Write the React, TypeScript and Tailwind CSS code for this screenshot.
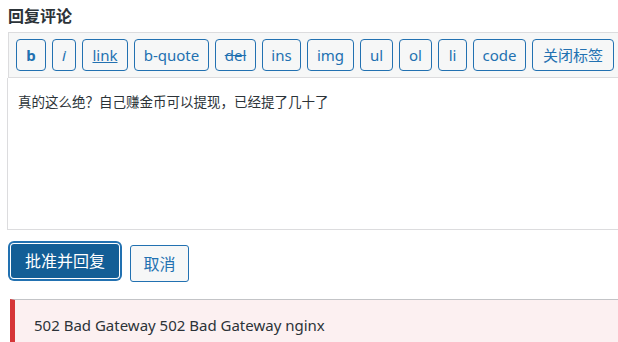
import React from "react";

const btns: { label: string; w: string; cls?: string }[] = [
  { label: "b", w: "w-[30px]", cls: "font-bold" },
  { label: "i", w: "w-[24px]", cls: "italic" },
  { label: "link", w: "w-[46px]", cls: "underline" },
  { label: "b-quote", w: "w-[75px]" },
  { label: "del", w: "w-[41px]", cls: "line-through" },
  { label: "ins", w: "w-[39px]" },
  { label: "img", w: "w-[47px]" },
  { label: "ul", w: "w-[33px]" },
  { label: "ol", w: "w-[33px]" },
  { label: "li", w: "w-[29px]" },
  { label: "code", w: "w-[53px]" },
  { label: "关闭标签", w: "w-[82px]" },
];

export default function App() {
  return (
    <div className="relative w-[618px] h-[342px] overflow-hidden bg-white font-['Noto_Sans','Noto_Sans_CJK_SC',sans-serif]">
      <div className="pl-[8px] pt-[6px] h-[32px] text-[16px] font-bold leading-[20px] text-[#2c3338]">
        回复评论
      </div>
      <div className="ml-[8px] w-[640px] border border-[#dcdcde] bg-[#f6f7f7] pl-[7px] pt-[6px] pb-[6px] flex gap-[6px]">
        {btns.map((b) => (
          <div
            key={b.label}
            className={`${b.w} h-[32px] shrink-0 flex items-center justify-center rounded-[4px] border border-[#2271b1] bg-[#f6f7f7] text-[15px] text-[#2271b1] leading-none`}
          >
            <span className={b.cls}>{b.label}</span>
          </div>
        ))}
      </div>
      <div className="ml-[7px] w-[640px] h-[152px] border-x border-b border-[#dcdcde] bg-white pl-[10px] pt-[13px]">
        <div className="text-[13.5px] leading-[20px] text-[#2c3338] font-['Noto_Sans_CJK_SC',sans-serif]">
          真的这么绝？自己赚金币可以提现，已经提了几十了
        </div>
      </div>
      <div className="flex items-start mt-[14px] ml-[11px]">
        <div className="w-[108px] h-[34px] flex items-center justify-center rounded-[3px] bg-[#135e96] text-white text-[16px] shadow-[0_0_0_1px_#fff,0_0_0_3px_#2271b1]">
          批准并回复
        </div>
        <div className="ml-[11px] mt-[1px] w-[59px] h-[37px] flex items-center justify-center rounded-[3px] border border-[#2271b1] bg-[#f6f7f7] text-[#2271b1] text-[16px]">
          取消
        </div>
      </div>
      <div className="mt-[17px] ml-[10px] h-[60px] border-l-[5px] border-l-[#d63638] border-t border-t-[#c3c4c7] bg-[#fcf0f1] pl-[19px] pt-[15px]">
        <div className="text-[15px] leading-[20px] text-[#2c3338]">
          502 Bad Gateway 502 Bad Gateway nginx
        </div>
      </div>
    </div>
  );
}
